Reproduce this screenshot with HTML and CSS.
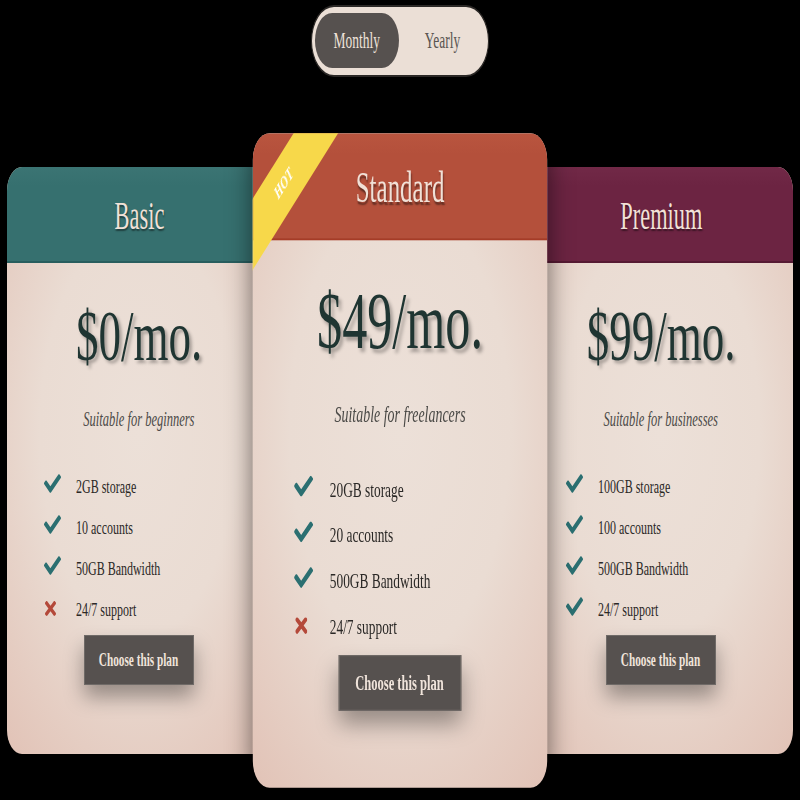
FILE: index.html
```html
<!DOCTYPE html>
<html lang="en">
<head>
<meta charset="utf-8">
<title>Pricing</title>
<link rel="stylesheet" href="styles.css">
</head>
<body>
<svg class="defs" width="0" height="0" aria-hidden="true">
  <symbol id="i-check" viewBox="0 62 512 388" preserveAspectRatio="none">
    <path d="M173.898 439.404l-166.4-166.4c-9.997-9.997-9.997-26.206 0-36.204l36.203-36.204c9.997-9.998 26.207-9.998 36.204 0L192 312.69 432.095 72.596c9.997-9.997 26.207-9.997 36.204 0l36.203 36.204c9.997 9.997 9.997 26.206 0 36.204l-294.4 294.401c-9.998 9.997-26.207 9.997-36.204-.001z"/>
  </symbol>
  <symbol id="i-cross" viewBox="0 80 352 352" preserveAspectRatio="none">
    <path d="M242.72 256l100.07-100.07c12.28-12.28 12.28-32.19 0-44.48l-22.240-22.24c-12.28-12.28-32.19-12.28-44.48 0L176 189.28 75.93 89.21c-12.28-12.28-32.19-12.28-44.48 0L9.21 111.45c-12.28 12.28-12.28 32.19 0 44.48L109.28 256 9.21 356.07c-12.28 12.28-12.28 32.19 0 44.48l22.24 22.24c12.28 12.28 32.2 12.28 44.48 0L176 322.72l100.07 100.07c12.28 12.28 32.2 12.28 44.48 0l22.24-22.24c12.28-12.28 12.28-32.19 0-44.48L242.72 256z"/>
  </symbol>
</svg>
<div class="page">
  <div class="toggle">
    <button class="toggle-btn toggle-monthly active"><span class="sq sq-toggle">Monthly</span></button>
    <button class="toggle-btn toggle-yearly"><span class="sq sq-toggle">Yearly</span></button>
  </div>

  <div class="plans">
    <section class="card card-basic">
      <header class="card-head"><h2><span class="sq sq-title">Basic</span></h2></header>
      <div class="card-body">
        <div class="price"><span class="sq">$0/mo.</span></div>
        <p class="desc"><span class="sq">Suitable for beginners</span></p>
        <ul class="features">
          <li><span class="ic-cell"><svg class="ic check"><use href="#i-check"/></svg></span><span class="sq sq-left">2GB storage</span></li>
          <li><span class="ic-cell"><svg class="ic check"><use href="#i-check"/></svg></span><span class="sq sq-left">10 accounts</span></li>
          <li><span class="ic-cell"><svg class="ic check"><use href="#i-check"/></svg></span><span class="sq sq-left">50GB Bandwidth</span></li>
          <li><span class="ic-cell"><svg class="ic cross"><use href="#i-cross"/></svg></span><span class="sq sq-left">24/7 support</span></li>
        </ul>
        <button class="choose"><span class="sq">Choose this plan</span></button>
      </div>
    </section>

    <section class="card card-standard">
      <div class="ribbon"><span>HOT</span></div>
      <header class="card-head"><h2><span class="sq sq-title">Standard</span></h2></header>
      <div class="card-body">
        <div class="price"><span class="sq">$49/mo.</span></div>
        <p class="desc"><span class="sq">Suitable for freelancers</span></p>
        <ul class="features">
          <li><span class="ic-cell"><svg class="ic check"><use href="#i-check"/></svg></span><span class="sq sq-left">20GB storage</span></li>
          <li><span class="ic-cell"><svg class="ic check"><use href="#i-check"/></svg></span><span class="sq sq-left">20 accounts</span></li>
          <li><span class="ic-cell"><svg class="ic check"><use href="#i-check"/></svg></span><span class="sq sq-left">500GB Bandwidth</span></li>
          <li><span class="ic-cell"><svg class="ic cross"><use href="#i-cross"/></svg></span><span class="sq sq-left">24/7 support</span></li>
        </ul>
        <button class="choose"><span class="sq">Choose this plan</span></button>
      </div>
    </section>

    <section class="card card-premium">
      <header class="card-head"><h2><span class="sq sq-title">Premium</span></h2></header>
      <div class="card-body">
        <div class="price"><span class="sq">$99/mo.</span></div>
        <p class="desc"><span class="sq">Suitable for businesses</span></p>
        <ul class="features">
          <li><span class="ic-cell"><svg class="ic check"><use href="#i-check"/></svg></span><span class="sq sq-left">100GB storage</span></li>
          <li><span class="ic-cell"><svg class="ic check"><use href="#i-check"/></svg></span><span class="sq sq-left">100 accounts</span></li>
          <li><span class="ic-cell"><svg class="ic check"><use href="#i-check"/></svg></span><span class="sq sq-left">500GB Bandwidth</span></li>
          <li><span class="ic-cell"><svg class="ic check"><use href="#i-check"/></svg></span><span class="sq sq-left">24/7 support</span></li>
        </ul>
        <button class="choose"><span class="sq">Choose this plan</span></button>
      </div>
    </section>
  </div>
</div>
</body>
</html>
```
FILE: styles.css
```css
* {
  box-sizing: border-box;
  margin: 0;
  padding: 0;
}

html,
body {
  background: #000;
}

body {
  width: 800px;
  height: 800px;
  overflow: hidden;
  font-family: "Liberation Serif", "Times New Roman", serif;
}

.defs {
  position: absolute;
  width: 0;
  height: 0;
  overflow: hidden;
}

/* condensed serif look: the glyphs are squeezed horizontally */
.sq {
  display: inline-block;
  white-space: nowrap;
  transform: scaleX(0.625);
}

.sq-left {
  transform-origin: 0 50%;
}

.sq-title {
  transform: scaleX(0.56);
}

.sq-toggle {
  transform: scaleX(0.6);
}

.page {
  width: 800px;
  height: 800px;
  display: flex;
  flex-direction: column;
  align-items: center;
  padding-top: 5px;
}

/* ---------- billing toggle ---------- */
.toggle {
  display: flex;
  padding: 6px 3px 7px;
  border-style: solid;
  border-width: 2px 1.5px;
  border-color: #2b2826;
  border-radius: 23px / 36px;
  background: #ebdfd6;
}

.toggle-btn {
  height: 55px;
  border: 0;
  border-radius: 17.5px / 28px;
  background: transparent;
  font-family: "Liberation Serif", "Times New Roman", serif;
  font-size: 22.5px;
  color: #5a5552;
  display: flex;
  align-items: center;
  justify-content: center;
}

.toggle-monthly { width: 84px; }
.toggle-yearly { width: 86px; }

.toggle-btn.active {
  background: #56514f;
  color: #efe3da;
}

/* ---------- cards ---------- */
.plans {
  display: flex;
  align-items: center;
  margin-top: 90px;
}

.card {
  position: relative;
  z-index: 1;
  width: 264px;
  height: 587px;
  border-radius: 15px / 24px;
  overflow: hidden;
  display: flex;
  flex-direction: column;
  background: radial-gradient(ellipse 75% 70% at 50% 45%, #ece0d8 0%, #eadcd3 50%, #e2c4b8 100%);
  box-shadow: 0 0 22px rgba(0, 0, 0, 0.5);
}

.card-standard {
  z-index: 2;
  margin: 0 -3px;
  transform: scale(1.115);
}

.card-head {
  flex: none;
  height: 96px;
  padding-top: 4px;
  display: flex;
  align-items: center;
  justify-content: center;
  border-bottom: 2px solid;
}

.card-basic .card-head {
  background: linear-gradient(#3b7473, #36706f 20%);
  border-color: #285e5e;
}

.card-standard .card-head {
  background: linear-gradient(#b9553f, #b4503b 20%);
  border-color: #a63c27;
}

.card-premium .card-head {
  background: linear-gradient(#712947, #6c2442 20%);
  border-color: #561a33;
}

.card-head h2 {
  font-weight: normal;
  font-size: 40px;
  line-height: 38px;
  color: #f1e1d7;
  text-shadow: 1px 2px 2px rgba(0, 0, 0, 0.45);
}

.card-body {
  display: flex;
  flex-direction: column;
  align-items: center;
  padding-top: 37px;
}

.price {
  font-size: 72px;
  line-height: 72px;
  color: #1f3532;
  text-shadow: 4px 3px 4px rgba(0, 0, 0, 0.3);
}

.desc {
  margin-top: 34.5px;
  font-size: 20px;
  line-height: 24px;
  font-style: italic;
  color: #4b4a47;
}

.features {
  list-style: none;
  align-self: stretch;
  margin-top: 36px;
  padding-left: 37px;
}

.features li {
  display: flex;
  align-items: center;
  height: 41px;
  font-size: 19.2px;
  color: #2a2826;
}

.ic-cell {
  flex: none;
  width: 32px;
  display: flex;
}

.ic.check {
  width: 17px;
  height: 19px;
  margin-bottom: 7px;
  fill: #2b6f71;
}

.ic.cross {
  width: 11px;
  height: 15px;
  margin-left: 1px;
  margin-bottom: 3px;
  fill: #b4493a;
}

.choose {
  margin-top: 4.5px;
  width: 110px;
  height: 50px;
  border: 1px solid #6f6a67;
  background: #56514f;
  color: #f0e4db;
  font-family: "Liberation Serif", "Times New Roman", serif;
  font-weight: bold;
  font-size: 18px;
  box-shadow: 0 12px 20px rgba(0, 0, 0, 0.35);
  display: flex;
  align-items: center;
  justify-content: center;
}

/* ---------- HOT ribbon ---------- */
.ribbon {
  position: absolute;
  z-index: 3;
  left: -72px;
  top: 23px;
  width: 200px;
  height: 45px;
  background: #f7d84a;
  transform: scaleX(0.625) rotate(-45deg);
  display: flex;
  align-items: center;
  justify-content: center;
}

.ribbon span {
  color: #fff;
  font-style: italic;
  font-weight: bold;
  font-size: 15px;
}
```
